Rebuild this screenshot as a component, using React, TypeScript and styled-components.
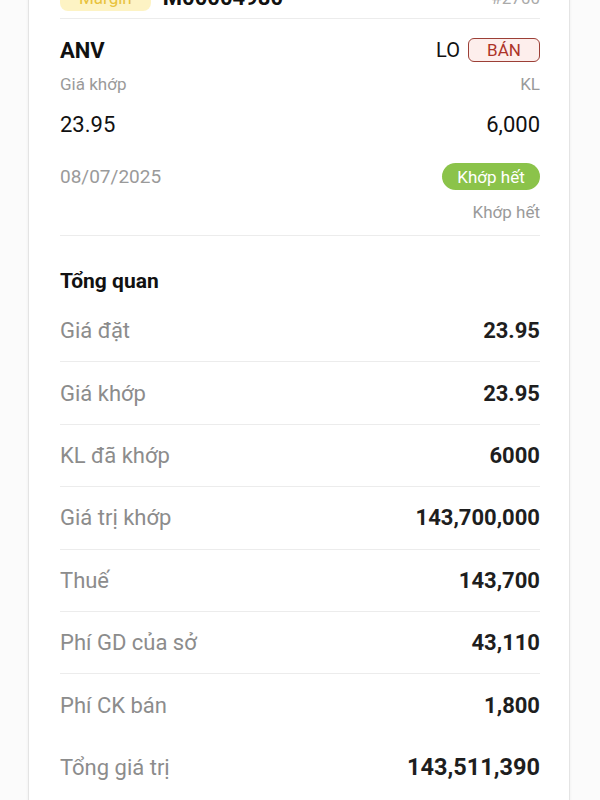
import styled, { createGlobalStyle } from "styled-components";

const GlobalStyle = createGlobalStyle`
    body {
        margin: 0;
        background: #fbfbfb;
        font-family: Roboto, "Noto Sans", "Liberation Sans", sans-serif;
        overflow: hidden;
    }
`;

const Page = styled.div`
    height: 800px;
    padding: 0 30px 0 28px;
    overflow: hidden;
`;

const Card = styled.div`
    margin-top: -23px;
    background: #ffffff;
    border-left: 1px solid #e4e4e4;
    border-right: 1px solid #e4e4e4;
    box-shadow: 0 0 3px rgba(0, 0, 0, 0.06);
    padding: 0 29px 0 31px;
    min-height: 900px;
`;

const TopRow = styled.div`
    display: flex;
    align-items: center;
    gap: 12px;
    height: 42px;
    border-bottom: 1px solid #ececec;
    box-sizing: border-box;
`;

const AccountBadge = styled.span`
    background: #fdf3c4;
    color: #e8c23c;
    font-size: 17px;
    border-radius: 8px;
    padding: 3px 19px;
`;

const AccountNo = styled.span`
    font-size: 22px;
    font-weight: 700;
    color: #111;
    flex: 1;
`;

const OrderNo = styled.span`
    font-size: 17px;
    color: #aaa;
`;

const Line = styled.div<{ $h: number; $mt: number }>`
    display: flex;
    align-items: center;
    justify-content: space-between;
    height: ${({ $h }) => $h}px;
    margin-top: ${({ $mt }) => $mt}px;
`;

const Symbol = styled.span`
    font-size: 22px;
    font-weight: 700;
    color: #111;
`;

const SideGroup = styled.div`
    display: flex;
    align-items: center;
    gap: 8px;
`;

const OrderType = styled.span`
    font-size: 20px;
    color: #111;
`;

const SideBadge = styled.span`
    box-sizing: border-box;
    width: 72px;
    height: 24px;
    display: inline-flex;
    align-items: center;
    justify-content: center;
    border: 1.5px solid #9c3f36;
    border-radius: 6px;
    background: #fdeeec;
    color: #ad3429;
    font-size: 17px;
`;

const SmallLabel = styled.span`
    font-size: 17px;
    color: #9a9a9a;
`;

const PlainValue = styled.span`
    font-size: 22px;
    color: #111;
`;

const DateText = styled.span`
    font-size: 19px;
    color: #9a9a9a;
`;

const StatusPill = styled.span`
    box-sizing: border-box;
    width: 98px;
    height: 27px;
    display: inline-flex;
    align-items: center;
    justify-content: center;
    border-radius: 14px;
    background: #8bc34a;
    color: #fff;
    font-size: 17px;
`;

const StatusRow = styled.div`
    display: flex;
    justify-content: flex-end;
    align-items: center;
    height: 20px;
    margin-top: 12px;
    padding-bottom: 13px;
    border-bottom: 1px solid #ececec;
`;

const SectionTitle = styled.div`
    height: 24px;
    line-height: 24px;
    margin-top: 33px;
    margin-bottom: 7px;
    font-size: 21px;
    font-weight: 700;
    color: #111;
`;

const InfoRow = styled.div<{ $divider: boolean }>`
    box-sizing: border-box;
    height: 62.4px;
    display: flex;
    align-items: center;
    justify-content: space-between;
    border-bottom: 1px solid ${({ $divider }) => ($divider ? "#ececec" : "transparent")};
`;

const InfoLabel = styled.span`
    font-size: 22px;
    color: #8c8c8c;
`;

const InfoValue = styled.span<{ $big?: boolean }>`
    font-size: ${({ $big }) => ($big ? 23.5 : 22)}px;
    font-weight: 700;
    color: #1e1e1e;
`;

const rows = [
    { label: "Giá đặt", value: "23.95" },
    { label: "Giá khớp", value: "23.95" },
    { label: "KL đã khớp", value: "6000" },
    { label: "Giá trị khớp", value: "143,700,000" },
    { label: "Thuế", value: "143,700" },
    { label: "Phí GD của sở", value: "43,110" },
    { label: "Phí CK bán", value: "1,800", last: true },
    { label: "Tổng giá trị", value: "143,511,390", big: true, last: true },
];

export default function App() {
    return (
        <>
            <GlobalStyle />
            <Page>
                <Card>
                    <TopRow>
                        <AccountBadge>Margin</AccountBadge>
                        <AccountNo>M00004980</AccountNo>
                        <OrderNo>#2700</OrderNo>
                    </TopRow>

                    <Line $h={24} $mt={19}>
                        <Symbol>ANV</Symbol>
                        <SideGroup>
                            <OrderType>LO</OrderType>
                            <SideBadge>BÁN</SideBadge>
                        </SideGroup>
                    </Line>
                    <Line $h={20} $mt={12}>
                        <SmallLabel>Giá khớp</SmallLabel>
                        <SmallLabel>KL</SmallLabel>
                    </Line>
                    <Line $h={26} $mt={17}>
                        <PlainValue>23.95</PlainValue>
                        <PlainValue>6,000</PlainValue>
                    </Line>
                    <Line $h={27} $mt={26}>
                        <DateText>08/07/2025</DateText>
                        <StatusPill>Khớp hết</StatusPill>
                    </Line>
                    <StatusRow>
                        <SmallLabel>Khớp hết</SmallLabel>
                    </StatusRow>

                    <SectionTitle>Tổng quan</SectionTitle>
                    {rows.map((r) => (
                        <InfoRow key={r.label} $divider={!r.last}>
                            <InfoLabel>{r.label}</InfoLabel>
                            <InfoValue $big={r.big}>{r.value}</InfoValue>
                        </InfoRow>
                    ))}
                </Card>
            </Page>
        </>
    );
}
